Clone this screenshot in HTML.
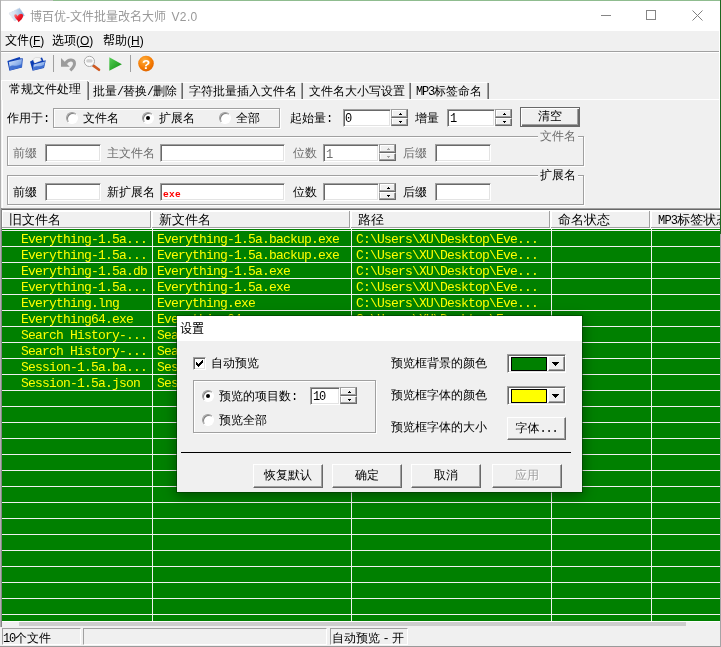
<!DOCTYPE html>
<html lang="zh-CN"><head><meta charset="utf-8"><title>博百优-文件批量改名大师 V2.0</title>
<style>
html,body{margin:0;padding:0}
body{will-change:transform;width:721px;height:647px;overflow:hidden;background:#f0f0f0;position:relative;
 font-family:"Liberation Mono","WenQuanYi Zen Hei","Noto Sans CJK SC",sans-serif;font-size:12px;line-height:14px;color:#000}
div,span,i,b{position:absolute;box-sizing:border-box;white-space:nowrap}
i,b{position:static;font-style:normal;font-weight:normal}
i{font-size:12px;letter-spacing:-1.2px}
.ui{font-family:"Liberation Sans","Noto Sans CJK SC",sans-serif}
.t{height:14px;line-height:14px;margin-top:1px}
.g{color:#6d6d6d}
/* sunken edit */
.ed{background:#fff;border:1px solid;border-color:#a0a0a0 #fff #fff #a0a0a0;box-shadow:inset 1px 1px 0 #696969,inset -1px -1px 0 #e3e3e3}
/* raised button */
.bt{background:#f0f0f0;border:1px solid;border-color:#fff #696969 #696969 #fff;box-shadow:inset -1px -1px 0 #a0a0a0,inset 1px 1px 0 #f0f0f0;text-align:center}
.gb{border:1px solid #a0a0a0;box-shadow:1px 1px 0 #fff, inset 1px 1px 0 #fff}
.lr{left:0;height:15px;width:721px}
.lr span{top:1px;height:15px;line-height:15px;font-size:13px;letter-spacing:-0.8px;color:#ff0}
.vl{top:229px;width:1px;height:392px;background:#f0f0f0}
.hl{left:2px;width:719px;height:1px;background:#f0f0f0}
.hd{top:211px;height:17px;background:#f0f0f0;border-right:1px solid #a0a0a0;border-bottom:1px solid #a0a0a0;box-shadow:inset 1px 1px 0 #fff, 1px 0 0 #fff;font-size:13px;line-height:20px;padding-left:7px;overflow:hidden}
.rd{width:12px;height:12px;border-radius:50%;background:#fff;border:1px solid;border-color:#a0a0a0 #fff #fff #a0a0a0;box-shadow:inset 1px 1px 0 #808080}
.rd.on:after{content:"";position:absolute;left:3px;top:3px;width:4px;height:4px;border-radius:50%;background:#000}
.sp{width:17px;height:9px}
.ar{width:0;height:0;border:3px solid transparent}
.ts{top:83px;width:2px;height:16px;border-left:1px solid #a0a0a0;border-right:1px solid #696969}
.sb{width:17px;background:#f0f0f0;border:1px solid;border-color:#fff #696969 #696969 #fff;box-shadow:inset -1px -1px 0 #a0a0a0}
.su{border-color:#a0a0a0 #696969 #696969 #a0a0a0;box-shadow:inset -1px -1px 0 #a0a0a0,inset 1px 1px 0 #fff}
.sd{border-color:#fff #696969 #696969 #a0a0a0;box-shadow:inset -1px -1px 0 #a0a0a0,inset 1px 0 0 #fff}
.au,.ad{position:absolute;left:7px;top:2px;width:3px;height:1px;background:#000}
.au{top:4px}
.au:before,.ad:before{content:"";position:absolute;left:1px;width:1px;height:1px;background:inherit}
.au:before{top:-1px}.ad:before{top:1px}
.stp{top:628px;height:17px;border:1px solid;border-color:#a0a0a0 #fff #fff #a0a0a0}

</style></head>
<body>
<!-- window frame -->
<div style="left:0;top:0;width:721px;height:1px;background:#8fbc8f"></div><div style="left:0;top:0;width:53px;height:1px;background:#c4c4c4"></div>
<div style="left:0;top:0;width:1px;height:647px;background:#b0b0b0"></div><div style="left:2px;top:99px;width:1px;height:109px;background:#fff"></div>
<!-- title bar -->
<div style="left:1px;top:1px;width:720px;height:30px;background:#fff"></div>
<svg style="position:absolute;left:4px;top:4px" width="26" height="24" viewBox="4 4 26 24">
 <defs><linearGradient id="st" x1="0" y1="0" x2="1" y2="0"><stop offset="0" stop-color="#eef2f8"/><stop offset=".35" stop-color="#d5e2f2"/><stop offset="1" stop-color="#7fa8d8"/></linearGradient>
 <linearGradient id="ht" x1="0" y1="0" x2="1" y2="1"><stop offset="0" stop-color="#ff9a9a"/><stop offset=".45" stop-color="#f01828"/><stop offset="1" stop-color="#c80010"/></linearGradient></defs>
 <polygon points="9,13.3 19.6,8.1 24.6,15.5 14.7,21" fill="url(#st)" stroke="#c9d2de" stroke-width=".7" stroke-dasharray="1 .8"/>
 <path d="M17.6 16.2 C16.6 13.4 13.4 13.8 14.4 16.6 C15.2 18.8 17.6 20 18.6 22.2 C20.4 20.4 23 18.6 23.1 16 C23.2 13.2 19.4 13 17.6 16.2 Z" fill="url(#ht)"/>
</svg>
<div class="ui t" style="left:30px;top:8px;color:#999;font-size:12px;height:16px;line-height:16px">博百优-文件批量改名大师<span style="position:static;margin-left:5.5px;letter-spacing:.35px">V2.0</span></div>
<div style="left:601px;top:15px;width:10px;height:1px;background:#858585"></div>
<div style="left:646px;top:10px;width:10px;height:10px;border:1px solid #858585"></div>
<svg style="position:absolute;left:691px;top:9px" width="13" height="13" viewBox="0 0 13 13"><path d="M1.5 1.5 L11.5 11.5 M11.5 1.5 L1.5 11.5" stroke="#808080" stroke-width="1" fill="none"/></svg>
<!-- menu -->
<div class="ui" style="left:5px;top:33px;height:16px;line-height:16px">文件(<u>F</u>)</div>
<div class="ui" style="left:52px;top:33px;height:16px;line-height:16px">选项(<u>O</u>)</div>
<div class="ui" style="left:103px;top:33px;height:16px;line-height:16px">帮助(<u>H</u>)</div>
<div style="left:1px;top:51px;width:720px;height:1px;background:#a0a0a0"></div>
<div style="left:1px;top:52px;width:720px;height:1px;background:#fff"></div>
<!-- toolbar -->
<svg style="position:absolute;left:0;top:52px" width="170" height="26" viewBox="0 52 170 26">
 <defs>
  <linearGradient id="fb" x1="0" y1="0" x2="0" y2="1"><stop offset="0" stop-color="#0f3fae"/><stop offset=".45" stop-color="#7aa4e6"/><stop offset="1" stop-color="#0a37a8"/></linearGradient>
  <linearGradient id="ff" x1="0" y1="0" x2="1" y2="1"><stop offset="0" stop-color="#dbe7fa"/><stop offset=".55" stop-color="#8fb2ec"/><stop offset="1" stop-color="#4b7fd8"/></linearGradient>
  <linearGradient id="pg" x1="0" y1="0" x2="1" y2="1"><stop offset="0" stop-color="#58d058"/><stop offset="1" stop-color="#0c8c0c"/></linearGradient>
  <radialGradient id="og" cx=".4" cy=".3" r=".8"><stop offset="0" stop-color="#ffb040"/><stop offset=".6" stop-color="#f57a00"/><stop offset="1" stop-color="#d85e00"/></radialGradient>
 </defs>
 <!-- folder closed -->
 <path d="M7.4 61 L19.6 57 L20.4 58.6 L22.8 58.2 L22 67.4 L9.4 70.8 Z" fill="#0c3db4"/>
 <path d="M8.8 62 L21.9 59 L21.5 67 L10 70 Z" fill="url(#ff)"/>
 <path d="M9.4 66.8 C13 63.4 16 67.8 21.6 64 L21.5 67 L10 70 Z" fill="#2f62cc" opacity=".8"/>
 <!-- folder open -->
 <path d="M31.6 60.4 L42 57.4 L44 62 L34 66 Z" fill="#0c3db4"/>
 <path d="M33 59.4 L35.6 57.4 L40 57.6 L41.4 60.6 L34.6 63.4 Z" fill="#f4f4f4" stroke="#c9c9c9" stroke-width=".5"/>
 <path d="M30 61.4 L32.4 60.8 L34 63.4 L45.8 60.2 L44 68 L32.6 70.8 Z" fill="#0c3db4"/>
 <path d="M33.6 64.4 L45 61.4 L43.6 67.6 L33.2 70 Z" fill="url(#ff)"/>
 <path d="M33.3 67.6 C36.5 64.8 39.5 67.8 44.2 64.8 L43.6 67.6 L33.2 70 Z" fill="#2f62cc" opacity=".8"/>
 <!-- sep -->
 <rect x="53" y="55" width="1" height="17" fill="#a0a0a0"/>
 <!-- undo -->
 <path d="M61 58 L69.7 66.7 L61 66.7 Z" fill="#9c9c9c"/>
 <path d="M65.6 63.4 C68.5 58.6 74.6 59.3 74.5 63.8 C74.4 66.6 72.4 68.4 70.3 70.4" fill="none" stroke="#9c9c9c" stroke-width="3"/>
 <!-- magnifier -->
 <line x1="93" y1="65.4" x2="99" y2="69.8" stroke="#cf5a22" stroke-width="2.6" stroke-linecap="round"/>
 <circle cx="89.4" cy="61.4" r="5.1" fill="#fafafa" stroke="#a8a8a8" stroke-width="1"/>
 <rect x="86.2" y="59.2" width="6.4" height="3.4" rx="1.5" fill="#cfcfcf"/>
 <!-- play -->
 <path d="M109.3 57.2 L121.9 64.2 L109.3 70.8 Z" fill="url(#pg)"/>
 <!-- sep -->
 <rect x="130" y="55" width="1" height="17" fill="#a0a0a0"/>
 <!-- help -->
 <circle cx="146" cy="63.6" r="7.8" fill="url(#og)"/>
 <text x="146" y="68.6" font-family="Liberation Sans, sans-serif" font-weight="bold" font-size="13.5" fill="#fff" text-anchor="middle">?</text>
</svg>
<!-- tabs -->
<div style="left:1px;top:99px;width:720px;height:1px;background:#fff"></div>
<div style="left:1px;top:80px;width:88px;height:20px;background:#f0f0f0;border-left:1px solid #fff;border-top:1px solid #fff"></div>
<div style="left:87px;top:81px;width:1px;height:19px;background:#a0a0a0"></div><div style="left:88px;top:82px;width:1px;height:18px;background:#696969"></div>
<div class="t" style="left:9px;top:82px">常规文件处理</div>
<div style="left:89px;top:82px;width:92px;height:1px;background:#fff"></div>
<div class="t" style="left:93px;top:84px">批量<i>/</i>替换<i>/</i>删除</div>
<div class="ts" style="left:181px"></div>
<div style="left:183px;top:82px;width:118px;height:1px;background:#fff"></div>
<div class="t" style="left:189px;top:84px">字符批量插入文件名</div>
<div class="ts" style="left:301px"></div>
<div style="left:303px;top:82px;width:106px;height:1px;background:#fff"></div>
<div class="t" style="left:309px;top:84px">文件名大小写设置</div>
<div class="ts" style="left:409px"></div>
<div style="left:411px;top:82px;width:76px;height:1px;background:#fff"></div>
<div class="t" style="left:416px;top:84px"><i>MP3</i>标签命名</div>
<div class="ts" style="left:487px"></div>
<!-- row 1 -->
<div class="t" style="left:7px;top:111px">作用于:</div>
<div class="gb" style="left:53px;top:108px;width:227px;height:20px"></div>
<div class="rd" style="left:66px;top:112px"></div><div class="t" style="left:83px;top:111px">文件名</div>
<div class="rd on" style="left:142px;top:112px"></div><div class="t" style="left:159px;top:111px">扩展名</div>
<div class="rd" style="left:219px;top:112px"></div><div class="t" style="left:236px;top:111px">全部</div>
<div class="t" style="left:290px;top:111px">起始量:</div>
<div class="ed" style="left:343px;top:109px;width:48px;height:18px"></div><div class="t" style="left:345px;top:111px"><i>0</i></div>
<div class="t" style="left:415px;top:111px">增量</div>
<div class="ed" style="left:447px;top:109px;width:48px;height:18px"></div><div class="t" style="left:450px;top:111px"><i>1</i></div>
<div class="bt" style="left:520px;top:107px;width:60px;height:20px;border-color:#696969;box-shadow:inset 1px 1px 0 #fff,inset -1px -1px 0 #696969,inset -2px -2px 0 #a0a0a0;line-height:18px">清空</div>
<div class="sb su" style="left:391px;top:109px;height:9px"><b class="au"></b></div><div class="sb sd" style="left:391px;top:118px;height:8px"><b class="ad"></b></div><div class="sb su" style="left:495px;top:109px;height:9px"><b class="au"></b></div><div class="sb sd" style="left:495px;top:118px;height:8px"><b class="ad"></b></div>
<!-- groupboxes -->
<div class="gb" style="left:7px;top:136px;width:577px;height:30px"></div>
<div class="t g" style="left:538px;top:129px;background:#f0f0f0;padding:0 2px">文件名</div>
<div class="gb" style="left:7px;top:175px;width:577px;height:30px"></div>
<div class="t" style="left:538px;top:168px;background:#f0f0f0;padding:0 2px">扩展名</div>
<div class="t g" style="left:13px;top:146px">前缀</div><div class="ed" style="left:45px;top:144px;width:56px;height:18px"></div><div class="t g" style="left:107px;top:146px">主文件名</div><div class="ed" style="left:160px;top:144px;width:125px;height:18px"></div><div class="t g" style="left:293px;top:146px">位数</div><div class="ed" style="left:323px;top:144px;width:56px;height:18px"></div><div class="sb su" style="left:379px;top:144px;height:9px"><b class="au" style="background:#a0a0a0"></b></div><div class="sb sd" style="left:379px;top:153px;height:8px"><b class="ad" style="background:#a0a0a0"></b></div><div class="t g" style="left:403px;top:146px">后缀</div><div class="ed" style="left:435px;top:144px;width:56px;height:18px"></div><div class="t" style="left:326px;top:147px;color:#6d6d6d"><i>1</i></div>
<div class="t" style="left:13px;top:185px">前缀</div><div class="ed" style="left:45px;top:183px;width:56px;height:18px"></div><div class="t" style="left:107px;top:185px">新扩展名</div><div class="ed" style="left:160px;top:183px;width:125px;height:18px"></div><div class="t" style="left:293px;top:185px">位数</div><div class="ed" style="left:323px;top:183px;width:56px;height:18px"></div><div class="sb su" style="left:379px;top:183px;height:9px"><b class="au"></b></div><div class="sb sd" style="left:379px;top:192px;height:8px"><b class="ad"></b></div><div class="t" style="left:403px;top:185px">后缀</div><div class="ed" style="left:435px;top:183px;width:56px;height:18px"></div><div style="left:163px;top:189px;height:12px;line-height:12px;font-size:9.5px;font-weight:bold;color:#f00;letter-spacing:.3px">exe</div>
<div style="left:719px;top:31px;width:1px;height:177px;background:#fff"></div>
<!-- list -->
<div style="left:1px;top:208px;width:720px;height:1px;background:#a0a0a0"></div>
<div style="left:1px;top:209px;width:720px;height:1px;background:#696969"></div>
<div style="left:2px;top:210px;width:719px;height:418px;background:#008000"></div>
<div style="left:2px;top:210px;width:719px;height:19px;background:#fff"></div>
<div style="left:2px;top:228px;width:719px;height:1px;background:#fff"></div>
<div class="hd" style="left:2px;width:149px">旧文件名</div><div class="hd" style="left:152px;width:198px">新文件名</div><div class="hd" style="left:351px;width:199px">路径</div><div class="hd" style="left:551px;width:99px">命名状态</div><div class="hd" style="left:651px;width:79px"><i style="letter-spacing:-0.8px">MP3</i>标签状态</div>
<div class="lr" style="top:231px"><span style="left:21px">Everything-1.5a...</span><span style="left:157px">Everything-1.5a.backup.exe</span><span style="left:356px">C:\Users\XU\Desktop\Eve...</span></div>
<div class="lr" style="top:247px"><span style="left:21px">Everything-1.5a...</span><span style="left:157px">Everything-1.5a.backup.exe</span><span style="left:356px">C:\Users\XU\Desktop\Eve...</span></div>
<div class="lr" style="top:263px"><span style="left:21px">Everything-1.5a.db</span><span style="left:157px">Everything-1.5a.exe</span><span style="left:356px">C:\Users\XU\Desktop\Eve...</span></div>
<div class="lr" style="top:279px"><span style="left:21px">Everything-1.5a...</span><span style="left:157px">Everything-1.5a.exe</span><span style="left:356px">C:\Users\XU\Desktop\Eve...</span></div>
<div class="lr" style="top:295px"><span style="left:21px">Everything.lng</span><span style="left:157px">Everything.exe</span><span style="left:356px">C:\Users\XU\Desktop\Eve...</span></div>
<div class="lr" style="top:311px"><span style="left:21px">Everything64.exe</span><span style="left:157px">Everything64.exe</span><span style="left:356px">C:\Users\XU\Desktop\Eve...</span></div>
<div class="lr" style="top:327px"><span style="left:21px">Search History-...</span><span style="left:157px">Search History-1.5a.exe</span><span style="left:356px">C:\Users\XU\Desktop\Eve...</span></div>
<div class="lr" style="top:343px"><span style="left:21px">Search History-...</span><span style="left:157px">Search History-1.5a.exe</span><span style="left:356px">C:\Users\XU\Desktop\Eve...</span></div>
<div class="lr" style="top:359px"><span style="left:21px">Session-1.5a.ba...</span><span style="left:157px">Session-1.5a.backup.exe</span><span style="left:356px">C:\Users\XU\Desktop\Eve...</span></div>
<div class="lr" style="top:375px"><span style="left:21px">Session-1.5a.json</span><span style="left:157px">Session-1.5a.exe</span><span style="left:356px">C:\Users\XU\Desktop\Eve...</span></div>
<div class="vl" style="left:152px"></div><div class="vl" style="left:351px"></div><div class="vl" style="left:551px"></div><div class="vl" style="left:651px"></div><div class="hl" style="top:230px"></div><div class="hl" style="top:246px"></div><div class="hl" style="top:262px"></div><div class="hl" style="top:278px"></div><div class="hl" style="top:294px"></div><div class="hl" style="top:310px"></div><div class="hl" style="top:326px"></div><div class="hl" style="top:342px"></div><div class="hl" style="top:358px"></div><div class="hl" style="top:374px"></div><div class="hl" style="top:390px"></div><div class="hl" style="top:406px"></div><div class="hl" style="top:422px"></div><div class="hl" style="top:438px"></div><div class="hl" style="top:454px"></div><div class="hl" style="top:470px"></div><div class="hl" style="top:486px"></div><div class="hl" style="top:502px"></div><div class="hl" style="top:518px"></div><div class="hl" style="top:534px"></div><div class="hl" style="top:550px"></div><div class="hl" style="top:566px"></div><div class="hl" style="top:582px"></div><div class="hl" style="top:598px"></div><div class="hl" style="top:614px"></div><div style="left:2px;top:621px;width:718px;height:7px;background:#f0f0f0"></div><div style="left:2px;top:621px;width:718px;height:1px;background:#fff"></div><div style="left:19px;top:622px;width:667px;height:4px;background:#cdcdcd"></div>
<div style="left:1px;top:208px;width:1px;height:419px;background:#868686"></div>
<!-- status bar -->
<div style="left:0;top:627px;width:721px;height:20px;background:#f0f0f0"></div>
<div class="stp" style="left:2px;width:79px"></div><div class="t" style="left:3px;top:631px"><i>10</i>个文件</div>
<div class="stp" style="left:83px;width:244px"></div>
<div class="stp" style="left:330px;width:78px"></div><div class="t" style="left:332px;top:631px">自动预览<i style="display:inline-block;width:12px;text-align:center;letter-spacing:0">-</i>开</div>
<div style="left:0;top:646px;width:721px;height:1px;background:#9a9a9a"></div>
<div style="left:720px;top:0;width:1px;height:234px;background:#1f651f"></div>
<div style="left:720px;top:234px;width:1px;height:413px;background:#a6a4a6"></div>
<!-- dialog -->
<div style="left:177px;top:316px;width:405px;height:176px;background:#f0f0f0;box-shadow:0 0 0 1px rgba(0,50,0,.5),0 3px 12px 1px rgba(0,0,0,.4)">
<div style="left:0;top:0;width:405px;height:25px;background:#fff"></div>
<div class="ui" style="left:3px;top:5px;height:16px;line-height:16px">设置</div>
<!-- checkbox -->
<div class="ed" style="left:16px;top:41px;width:13px;height:13px"></div>
<svg style="position:absolute;left:19px;top:44px" width="7" height="7" viewBox="0 0 7 7" shape-rendering="crispEdges"><rect x="6" y="0" width="1" height="1"/><rect x="5" y="1" width="2" height="1"/><rect x="0" y="2" width="1" height="1"/><rect x="4" y="2" width="3" height="1"/><rect x="0" y="3" width="2" height="1"/><rect x="3" y="3" width="3" height="1"/><rect x="0" y="4" width="5" height="1"/><rect x="1" y="5" width="3" height="1"/><rect x="2" y="6" width="1" height="1"/></svg>
<div class="t" style="left:34px;top:40px">自动预览</div>
<!-- group -->
<div style="left:16px;top:64px;width:183px;height:53px;border:1px solid #a0a0a0;box-shadow:1px 1px 0 #fff,inset 1px 1px 0 #fff"></div>
<div class="rd on" style="left:25px;top:74px"></div><div class="t" style="left:42px;top:73px">预览的项目数<i>:</i></div>
<div class="ed" style="left:133px;top:71px;width:30px;height:18px"></div><div class="t" style="left:136px;top:73px"><i>10</i></div>
<div class="sb su" style="left:163px;top:71px;height:9px"><b class="au"></b></div><div class="sb sd" style="left:163px;top:80px;height:8px"><b class="ad"></b></div>
<div class="rd" style="left:25px;top:98px"></div><div class="t" style="left:42px;top:97px">预览全部</div>
<!-- right -->
<div class="t" style="left:214px;top:40px">预览框背景的颜色</div>
<div class="t" style="left:214px;top:72px">预览框字体的颜色</div>
<div class="t" style="left:214px;top:104px">预览框字体的大小</div>
<div class="ed" style="left:330px;top:38px;width:59px;height:19px"></div>
<div style="left:334px;top:41px;width:36px;height:14px;background:#008000;border:1px solid #000"></div>
<div class="sb" style="left:371px;top:40px;width:17px;height:15px"></div><svg style="position:absolute;left:375px;top:46px" width="7" height="4" viewBox="0 0 7 4" shape-rendering="crispEdges"><rect x="0" y="0" width="7" height="1"/><rect x="1" y="1" width="5" height="1"/><rect x="2" y="2" width="3" height="1"/><rect x="3" y="3" width="1" height="1"/></svg>
<div class="ed" style="left:330px;top:70px;width:59px;height:19px"></div>
<div style="left:334px;top:73px;width:36px;height:14px;background:#ff0;border:1px solid #000"></div>
<div class="sb" style="left:371px;top:72px;width:17px;height:15px"></div><svg style="position:absolute;left:375px;top:78px" width="7" height="4" viewBox="0 0 7 4" shape-rendering="crispEdges"><rect x="0" y="0" width="7" height="1"/><rect x="1" y="1" width="5" height="1"/><rect x="2" y="2" width="3" height="1"/><rect x="3" y="3" width="1" height="1"/></svg>
<div class="bt" style="left:330px;top:101px;width:59px;height:23px;line-height:22px">字体<i>...</i></div>
<!-- sep -->
<div style="left:4px;top:136px;width:390px;height:1px;background:#000"></div>
<!-- buttons -->
<div class="bt" style="left:76px;top:148px;width:70px;height:24px;line-height:23px">恢复默认</div>
<div class="bt" style="left:155px;top:148px;width:70px;height:24px;line-height:23px">确定</div>
<div class="bt" style="left:234px;top:148px;width:70px;height:24px;line-height:23px">取消</div>
<div class="bt" style="left:315px;top:148px;width:70px;height:24px;line-height:23px;color:#a0a0a0;text-shadow:1px 1px 0 #fff">应用</div>
</div>

</body></html>
